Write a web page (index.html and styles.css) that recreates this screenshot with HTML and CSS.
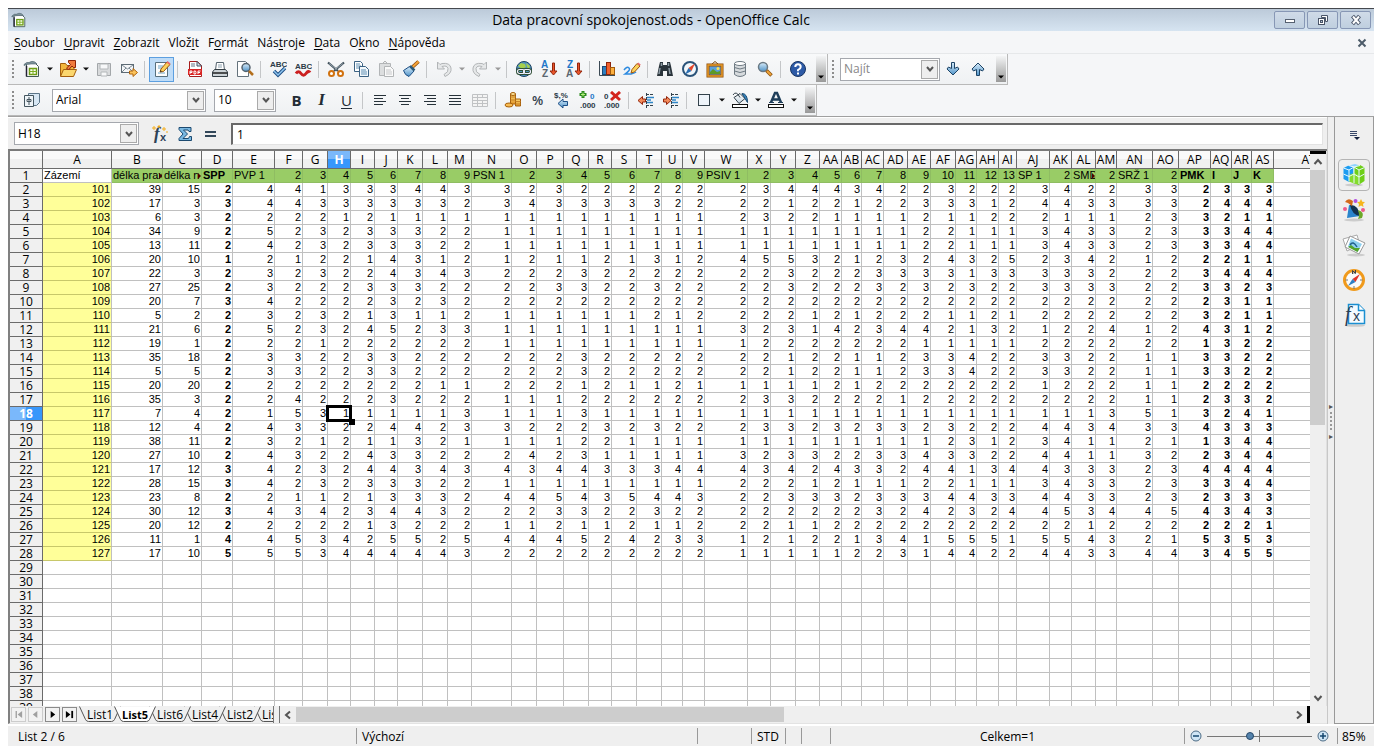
FILE: index.html
```html
<!DOCTYPE html>
<html lang="cs">
<head>
<meta charset="utf-8">
<title>Data pracovní spokojenost.ods - OpenOffice Calc</title>
<link rel="stylesheet" href="styles.css">
</head>
<body>
<svg class="defs" aria-hidden="true">
  <defs>
    <linearGradient id="blue" x1="0" y1="0" x2="0" y2="1"><stop offset="0" stop-color="#d8ecfa"/><stop offset="1" stop-color="#4f93c8"/></linearGradient>
    <linearGradient id="gold" x1="0" y1="0" x2="0" y2="1"><stop offset="0" stop-color="#fbd871"/><stop offset="1" stop-color="#e2962a"/></linearGradient>
    <linearGradient id="steel" x1="0" y1="0" x2="0" y2="1"><stop offset="0" stop-color="#ffffff"/><stop offset="1" stop-color="#c3d3df"/></linearGradient>
    <symbol id="i-calc" viewBox="0 0 18 18"><path d="M3.500 3.500h9l3 3v10h-12z" fill="#fff" stroke="#435a52"/><path d="M1 4.500q3-3 5-2Q9 .5 12 2l2 2H8Q4 4 1 5.500z" fill="#7d929b" stroke="#4a5f68" stroke-width=".6"/><path d="M3.500 6v10.500" stroke="#223" stroke-width="1.500"/><rect x="6.500" y="8.500" width="7" height="6" fill="#fbffef" stroke="#6c9d16" stroke-width="1.500"/><path d="M10 8v7M6 11.500h8" stroke="#7cae22"/></symbol>
    <symbol id="i-down" viewBox="0 0 8 8"><path d="M1 2.500h6L4 5.500z" fill="currentColor"/></symbol>
    <symbol id="i-chev" viewBox="0 0 8 8"><path d="M1 2l3 3.500L7 2" fill="none" stroke="#555" stroke-width="2"/></symbol>
  </defs>
</svg>
<div class="window">
  <header class="titlebar">
    <svg class="app-icon" viewBox="0 0 18 18"><use href="#i-calc"/></svg>
    <h1>Data pracovní spokojenost.ods - OpenOffice Calc</h1>
    <div class="win-buttons">
      <button aria-label="Minimalizovat"><svg viewBox="0 0 14 12"><rect x="2.500" y="5.500" width="9" height="3" fill="#fff" stroke="#556070"/></svg></button>
      <button aria-label="Obnovit"><svg viewBox="0 0 14 12"><path d="M5.500 1.500h6v6h-2v-4h-4z" fill="#fff" stroke="#4a5568"/><rect x="2.500" y="4.500" width="6" height="6" fill="#fff" stroke="#4a5568"/><rect x="4.500" y="6.500" width="2" height="2" fill="#b9c8d8" stroke="#4a5568"/></svg></button>
      <button aria-label="Zavřít"><svg viewBox="0 0 14 12"><path d="M3.500 2l7 8M10.500 2l-7 8" stroke="#4a5568" stroke-width="4"/><path d="M4 2.500l6 7M10 2.500l-6 7" stroke="#fff" stroke-width="2"/></svg></button>
    </div>
  </header>

  <nav class="menubar">
    <button><u>S</u>oubor</button><button><u>U</u>pravit</button><button><u>Z</u>obrazit</button><button>Vlož<u>i</u>t</button><button>F<u>o</u>rmát</button><button>Nás<u>t</u>roje</button><button><u>D</u>ata</button><button>O<u>k</u>no</button><button><u>N</u>ápověda</button>
    <button class="doc-close" aria-label="Zavřít dokument"><svg viewBox="0 0 10 10"><path d="M1.500 1.500l7 7M8.500 1.500l-7 7" stroke="#4d5c6a" stroke-width="2"/></svg></button>
  </nav>

  <div class="bars">
  <div class="toolbar-row">
    <div class="toolbar">
      <span class="grip"></span>
      <button class="tb" aria-label="Nový"><svg viewBox="0 0 18 18"><use href="#i-calc"/></svg></button><button class="dd" aria-label="Nový: možnosti"><svg viewBox="0 0 8 8"><use href="#i-down"/></svg></button>
      <button class="tb" aria-label="Otevřít"><svg viewBox="0 0 18 18"><path d="M1.500 16V3.500h5l1.500 2h7V10" fill="#f2b63c" stroke="#a45e0d"/><path d="M1.500 16.500l3-7h13l-3 7z" fill="#fbd76e" stroke="#a45e0d"/><path d="M7.500 8l4-3.500L9.500 2.500v-2h7v7h-2l-1.500-1.500-3.500 4z" fill="#f07a3c" stroke="#8c2408"/></svg></button><button class="dd" aria-label="Otevřít: možnosti"><svg viewBox="0 0 8 8"><use href="#i-down"/></svg></button>
      <button class="tb off" aria-label="Uložit"><svg viewBox="0 0 18 18"><path d="M2.500 3.500h13v12h-13z" fill="#d8dadc" stroke="#a3a7aa"/><path d="M5 4h8v5H5zM6 12h6v4H6z" fill="#f7f8f9" stroke="#b4b8ba"/></svg></button>
      <button class="tb" aria-label="E-mail"><svg viewBox="0 0 18 18"><rect x="1.500" y="4.500" width="12" height="8" fill="#f4f6f8" stroke="#5d6b75"/><path d="M2 5l5.500 4L13 5M2 12l4-4m3 0l4 4" fill="none" stroke="#7c8a94"/><path d="M9.500 11h3.500V8.500l4.500 4-4.500 4V14H9.500z" fill="#fac35c" stroke="#b0640c"/></svg></button>
      <i class="sep"></i>
      <button class="tb on" aria-label="Upravit soubor"><svg viewBox="0 0 18 18"><path d="M2.500 2.500h12v14h-12z" fill="#fdfdfd" stroke="#58707e"/><path d="M5 6h5M5 8h4M5 13h7" stroke="#6fa4c4"/><path d="M7 12l1-3 6-7 3 2.500-6.500 7z" fill="#fbd25a" stroke="#a0560b"/><path d="M13.500 2.500l1-1.500 3 2.500-1 1.500z" fill="#e9696a"/><path d="M7 12l.6-1.800 1.500 1.200z" fill="#333"/></svg></button>
      <i class="sep"></i>
      <button class="tb" aria-label="Export do PDF"><svg viewBox="0 0 18 18"><path d="M3.500 1.500h8l4 4v11h-12z" fill="#fff" stroke="#a51d1d"/><path d="M11 1.500V6h4.500z" fill="#d8e3ea" stroke="#456"/><path d="M5 4h4M5 6h4" stroke="#678"/><rect x="2" y="9" width="14" height="6" fill="#d92525"/><path d="M4 14v-3h2v1.500H4M8 11v3h1.500l.5-1.500-.5-1.500zM12 14v-3h2.500M12 12.500h2" stroke="#fff" fill="none"/></svg></button>
      <button class="tb" aria-label="Tisk"><svg viewBox="0 0 18 18"><path d="M4.500 10L5.500 2.500h7L13.500 10z" fill="#fff" stroke="#53626d"/><path d="M7 5h4M7 7h4" stroke="#8fa3b1"/><path d="M1.500 12l2-2.500h11l2 2.500v4.500h-15z" fill="#cbd2d6" stroke="#333d44"/><path d="M2 13h14" stroke="#222" stroke-width="1.500"/></svg></button>
      <button class="tb" aria-label="Náhled"><svg viewBox="0 0 18 18"><path d="M1.500 1.500h8l3 3v12h-11z" fill="#fff" stroke="#64727c"/><circle cx="10" cy="7.500" r="4" fill="url(#blue)" stroke="#55636e" stroke-width="1.500"/><path d="M13 11l4 4" stroke="#b36e1c" stroke-width="2.500"/></svg></button>
      <i class="sep"></i>
      <button class="tb" aria-label="Kontrola pravopisu"><svg viewBox="0 0 18 18"><text x="1" y="7" class="g-abc">ABC</text><path d="M5 11l4 4 7-7" fill="none" stroke="#1d4f86" stroke-width="3.500"/><path d="M5 11l4 4 7-7" fill="none" stroke="#8fc5ef" stroke-width="1.500"/></svg></button>
      <button class="tb" aria-label="Automatická kontrola"><svg viewBox="0 0 18 18"><text x="1" y="9" class="g-abc">ABC</text><path d="M2 13.500q2.500-3.500 5 0t5 0 4-1" fill="none" stroke="#cb1f1f" stroke-width="3"/></svg></button>
      <i class="sep"></i>
      <button class="tb" aria-label="Vyjmout"><svg viewBox="0 0 18 18"><path d="M1 2.500l10 8.500M17 2.500L7 11" stroke="#3f4f5a" stroke-width="2.200"/><path d="M2 3.500l8 6M16 3.500l-8 6" stroke="#b9c5ce" stroke-width=".7"/><circle cx="4.500" cy="13.500" r="2.500" fill="#fff" stroke="#d1710e" stroke-width="2"/><circle cx="13.500" cy="13.500" r="2.500" fill="#fff" stroke="#d1710e" stroke-width="2"/></svg></button>
      <button class="tb" aria-label="Kopírovat"><svg viewBox="0 0 18 18"><path d="M2.500 1.500h6l2 2v8h-8z" fill="#fff" stroke="#3b6283"/><path d="M4 4h4M4 6h5M4 8h4" stroke="#5f8fb3"/><path d="M7.500 6.500h6l3 3v7h-9z" fill="#f2f8fc" stroke="#3b6283"/><path d="M9 10h5M9 12h6M9 14h6" stroke="#5f8fb3"/></svg></button>
      <button class="tb off" aria-label="Vložit"><svg viewBox="0 0 18 18"><path d="M2.500 3.500h11v12h-11z" fill="#dcdedf" stroke="#b2b5b7"/><path d="M5.500 3.500L8 1l2.500 2.500z" fill="#eee" stroke="#b2b5b7"/><path d="M7.500 6.500h6l3 3v7h-9z" fill="#fafafa" stroke="#b2b5b7"/><path d="M9 10h5M9 12h6M9 14h6" stroke="#c6c8ca"/></svg></button>
      <button class="tb" aria-label="Kopírovat formát"><svg viewBox="0 0 18 18"><path d="M16.500 1.500l-6 5.500" stroke="#8a4a0b" stroke-width="3.500"/><path d="M16.500 1.500l-6 5.500" stroke="#f5a338" stroke-width="2"/><path d="M1.500 10.500l6-4 4.500 4.500-5 5.500q-4-1-5.500-6z" fill="url(#blue)" stroke="#1c4e85"/><path d="M8 6l4.500 4.500" stroke="#2c5a7a" stroke-width="2.500"/></svg></button>
      <i class="sep"></i>
      <button class="tb off" aria-label="Zpět"><svg viewBox="0 0 18 18"><path d="M2.500 2v7h7L7 6.500q5-1.500 6 2t-4 6l1 2q7-3 6-8.500T7 3.500L5 4.500z" fill="#e6e8e9" stroke="#b2b5b7"/></svg></button><button class="dd off" aria-label="Zpět: historie"><svg viewBox="0 0 8 8"><use href="#i-down"/></svg></button>
      <button class="tb off" aria-label="Znovu"><svg viewBox="0 0 18 18"><path d="M15.500 2v7h-7L11 6.500q-5-1.500-6 2t4 6l-1 2q-7-3-6-8.500T11 3.500l2 1z" fill="#e6e8e9" stroke="#b2b5b7"/></svg></button><button class="dd off" aria-label="Znovu: historie"><svg viewBox="0 0 8 8"><use href="#i-down"/></svg></button>
      <i class="sep"></i>
      <button class="tb" aria-label="Hypertextový odkaz"><svg viewBox="0 0 18 18"><circle cx="9" cy="9" r="7.500" fill="#4f93c0" stroke="#1d415e"/><path d="M3 6l3-3 4 1 1 3-4 2zM11 3l4 3-1 3-2-2z" fill="#a5cf4d"/><rect x="2.500" y="9.500" width="7" height="4" rx="2" fill="none" stroke="#2f4f33" stroke-width="3"/><rect x="8.500" y="9.500" width="7" height="4" rx="2" fill="none" stroke="#2f4f33" stroke-width="3"/><rect x="2.500" y="9.500" width="7" height="4" rx="2" fill="none" stroke="#eef" stroke-width="1.200"/><rect x="8.500" y="9.500" width="7" height="4" rx="2" fill="none" stroke="#eef" stroke-width="1.200"/></svg></button>
      <button class="tb" aria-label="Seřadit vzestupně"><svg viewBox="0 0 18 18"><text x="1" y="8" class="g-az g-blue">A</text><text x="2" y="17" class="g-az">Z</text><path d="M12.500 3v8h-2.500l3.500 4 3.500-4H14.500V3z" fill="#e9552a" stroke="#94260c"/></svg></button>
      <button class="tb" aria-label="Seřadit sestupně"><svg viewBox="0 0 18 18"><text x="2" y="8" class="g-az g-blue">Z</text><text x="1" y="17" class="g-az">A</text><path d="M12.500 3v8h-2.500l3.500 4 3.500-4H14.500V3z" fill="#e9552a" stroke="#94260c"/></svg></button>
      <i class="sep"></i>
      <button class="tb" aria-label="Graf"><svg viewBox="0 0 18 18"><path d="M1.500 1v14.500H17" fill="none" stroke="#3b4a55"/><rect x="4.500" y="6.500" width="4" height="8" fill="#2f7fc0" stroke="#174a77"/><rect x="8.500" y="2.500" width="4" height="12" fill="#f0602c" stroke="#8e240b"/><rect x="12.500" y="7.500" width="4" height="7" fill="#fbb040" stroke="#a35b0c"/></svg></button>
      <button class="tb" aria-label="Kresba"><svg viewBox="0 0 18 18"><path d="M1 10q3-4 5-2t-4 6h6q4-1 5-2" fill="none" stroke="#2e8be0" stroke-width="1.500"/><path d="M8 13l1-3.500 5-6 3 2.500-5.500 6z" fill="#fbd25a" stroke="#a0560b"/><path d="M14.200 4l1-1.500 2.500 2-.8 1.300z" fill="#e9696a"/></svg></button>
      <i class="sep"></i>
      <button class="tb" aria-label="Najít a nahradit"><svg viewBox="0 0 18 18"><path d="M4 2h3v3h4V2h3l1 4 2 10h-6v-5H7v5H1L3 6z" fill="#2a343b"/><path d="M4 8l-1 6M13 8l1 6M5.500 3v3M12.500 3v3" stroke="#8d9ba5" stroke-width="1.500"/></svg></button>
      <button class="tb" aria-label="Navigátor"><svg viewBox="0 0 18 18"><circle cx="9" cy="9" r="7" fill="#f1f7fb" stroke="#2a5379" stroke-width="2"/><path d="M14 3.500L10.500 11 7.500 8z" fill="#e2452a"/><path d="M4 14.500L10.500 11 7.500 8z" fill="#2b6eb0"/></svg></button>
      <button class="tb" aria-label="Galerie"><svg viewBox="0 0 18 18"><path d="M6 4l3-2.500L12 4" fill="none" stroke="#7a4508"/><rect x="2" y="5" width="14" height="11" fill="#5ba0dc" stroke="#8f4d06" stroke-width="3"/><rect x="2" y="5" width="14" height="11" fill="none" stroke="#e69a2b" stroke-width="1.500"/><path d="M4 12l3-3 4 3 3-1v3H4z" fill="#5d9a28"/><circle cx="12" cy="8.500" r="1.500" fill="#ffe257"/></svg></button>
      <button class="tb" aria-label="Zdroje dat"><svg viewBox="0 0 18 18"><path d="M3.500 3.500v11q5.500 4 11 0v-11" fill="#d7dbde" stroke="#6e7a83"/><ellipse cx="9" cy="3.500" rx="5.500" ry="2" fill="#fff" stroke="#6e7a83"/><path d="M3.500 7.500q5.500 3 11 0M3.500 11q5.500 3 11 0" fill="none" stroke="#6e7a83"/></svg></button>
      <button class="tb" aria-label="Lupa"><svg viewBox="0 0 18 18"><circle cx="7" cy="7" r="4.500" fill="url(#blue)" stroke="#6a7984" stroke-width="1.500"/><path d="M10.500 10.500l5 5" stroke="#8c520d" stroke-width="3.500"/><path d="M11 11l4 4" stroke="#f0a43b" stroke-width="2"/></svg></button>
      <i class="sep"></i>
      <button class="tb" aria-label="Nápověda"><svg viewBox="0 0 18 18"><circle cx="9" cy="9" r="7.500" fill="#2d5aa6" stroke="#173463"/><path d="M6.300 7q0-2.700 2.700-2.700T11.700 7Q11.700 8.500 9 10v1.300" fill="none" stroke="#fff" stroke-width="2"/><rect x="8" y="12.500" width="2" height="2" fill="#fff"/></svg></button>
      <button class="more" aria-label="Další tlačítka"><svg viewBox="0 0 8 8"><use href="#i-down"/></svg></button>
    </div>
    <div class="toolbar">
      <span class="grip"></span>
      <div class="combo find"><input type="text" aria-label="Najít" placeholder="Najít"><button aria-label="Historie hledání"><svg viewBox="0 0 8 8"><use href="#i-chev"/></svg></button></div>
      <button class="tb" aria-label="Najít další"><svg viewBox="0 0 18 18"><path d="M7.500 2.500h3v6l3-1.500 1.500 2L9 15 3 9l1.500-2 3 1.500z" fill="url(#blue)" stroke="#1d4466"/></svg></button>
      <button class="tb" aria-label="Najít předchozí"><svg viewBox="0 0 18 18"><path d="M7.500 15.500h3v-6l3 1.500L15 9 9 3 3 9l1.500 2 3-1.500z" fill="url(#blue)" stroke="#1d4466"/></svg></button>
      <button class="more" aria-label="Další tlačítka"><svg viewBox="0 0 8 8"><use href="#i-down"/></svg></button>
    </div>
  </div>

  <div class="toolbar-row">
    <div class="toolbar format">
      <span class="grip"></span>
      <button class="tb" aria-label="Styly a formátování"><svg viewBox="0 0 18 18"><path d="M5.500 2.500h11v9l-3 3h-8z" fill="#d7e7f4" stroke="#5c7588"/><path d="M1.500 4.500h9v11h-9z" fill="#eef4f8" stroke="#44555f"/><path d="M6 6v8M4 8.500h4v2H4z" stroke="#44555f" fill="#fff"/></svg></button>
      <div class="combo font"><select aria-label="Název písma"><option>Arial</option></select><span class="drop"><svg viewBox="0 0 8 8"><use href="#i-chev"/></svg></span></div>
      <div class="combo size"><select aria-label="Velikost písma"><option>10</option></select><span class="drop"><svg viewBox="0 0 8 8"><use href="#i-chev"/></svg></span></div>
      <button class="tb letter bold">B</button><button class="tb letter italic">I</button><button class="tb letter under">U</button>
      <i class="sep"></i>
      <button class="tb" aria-label="Zarovnat vlevo"><svg viewBox="0 0 18 18"><path d="M3 4.500h12M3 7.500h9M3 10.500h12M3 13.500h9" stroke="#27323a"/></svg></button>
      <button class="tb" aria-label="Zarovnat na střed"><svg viewBox="0 0 18 18"><path d="M3 4.500h12M5 7.500h8M3 10.500h12M5 13.500h8" stroke="#27323a"/></svg></button>
      <button class="tb" aria-label="Zarovnat vpravo"><svg viewBox="0 0 18 18"><path d="M3 4.500h12M6 7.500h9M3 10.500h12M6 13.500h9" stroke="#27323a"/></svg></button>
      <button class="tb" aria-label="Do bloku"><svg viewBox="0 0 18 18"><path d="M3 4.500h12M3 7.500h12M3 10.500h12M3 13.500h12" stroke="#27323a"/></svg></button>
      <button class="tb off" aria-label="Sloučit buňky"><svg viewBox="0 0 18 18"><path d="M1.500 3.500h15v12h-15zM1.500 6.500h15M1.500 9.500h15M1.500 12.500h15M6.500 3.500v12M11.500 3.500v3M11.500 9.500v6" fill="#f4f4f4" stroke="#c0c2c4"/></svg></button>
      <i class="sep"></i>
      <button class="tb" aria-label="Měna"><svg viewBox="0 0 18 18"><path d="M6.500 3v10h5V3z" fill="url(#gold)" stroke="#a7600c"/><ellipse cx="9" cy="3" rx="2.500" ry="1.500" fill="#fde49a" stroke="#a7600c"/><path d="M11.500 8v7h5V8z" fill="url(#gold)" stroke="#a7600c"/><path d="M11.500 10.500h5M11.500 13h5M6.500 6h5M6.500 9h5" stroke="#c9842a"/><ellipse cx="5" cy="14" rx="4" ry="2" fill="#f7bb52" stroke="#a7600c"/></svg></button>
      <button class="tb letter pct">%</button>
      <button class="tb" aria-label="Standardní formát"><svg viewBox="0 0 18 18"><text x="0" y="7" class="g-sm">$,%</text><path d="M13.500 10.500H9V8l-5 4.500L9 17v-2.500h4.500z" fill="url(#blue)" stroke="#1d4f86"/></svg></button>
      <button class="tb" aria-label="Přidat desetinné místo"><svg viewBox="0 0 18 18"><path d="M4 0v7M.5 3.500h7" stroke="#2b8a1c" stroke-width="3"/><path d="M4 1.500v4M2 3.500h4" stroke="#b5f07c"/><text x="11" y="8" class="g-sm g-blue">0</text><text x="1" y="17" class="g-sm">.000</text></svg></button>
      <button class="tb" aria-label="Odebrat desetinné místo"><svg viewBox="0 0 18 18"><text x="0" y="8" class="g-sm">0</text><text x="0" y="17" class="g-sm">.000</text><path d="M7 1l9 8M16 1l-9 8" stroke="#d3231c" stroke-width="3"/></svg></button>
      <i class="sep"></i>
      <button class="tb" aria-label="Zmenšit odsazení"><svg viewBox="0 0 18 18"><path d="M9.500 2v15M9 3.500h8M9 14.500h8" stroke="#33414b" stroke-dasharray="3 1"/><path d="M10 6.500h7M10 9h4M10 11.500h6" stroke="#2f86c8" stroke-width="1.500"/><path d="M8.500 8H5.500V5.500L1 9.500l4.500 4v-2.500h3z" fill="#f28a5a" stroke="#94260c"/></svg></button>
      <button class="tb" aria-label="Zvětšit odsazení"><svg viewBox="0 0 18 18"><path d="M9.500 2v15M9 3.500h8M9 14.500h8" stroke="#33414b" stroke-dasharray="3 1"/><path d="M10 6.500h7M10 9h4M10 11.500h6" stroke="#2f86c8" stroke-width="1.500"/><path d="M1.500 8H4.500V5.500L9 9.500l-4.500 4v-2.500h-3z" fill="#f28a5a" stroke="#94260c"/></svg></button>
      <i class="sep"></i>
      <button class="tb" aria-label="Ohraničení"><svg viewBox="0 0 18 18"><rect x="3.500" y="3.500" width="11" height="11" fill="#eef4fa" stroke="#33414b"/></svg></button><button class="dd" aria-label="Ohraničení: možnosti"><svg viewBox="0 0 8 8"><use href="#i-down"/></svg></button>
      <button class="tb" aria-label="Barva pozadí"><svg viewBox="0 0 18 18"><path d="M3 6.500l6-4 5 5-6 5z" fill="url(#steel)" stroke="#33414b"/><path d="M2 4q3-5 7 2.500" fill="none" stroke="#33414b"/><path d="M11 2.500q5.500 0 5.500 9l-2.500-4z" fill="#3486c2" stroke="#1c4a70"/><rect x="1.500" y="13.500" width="15" height="3" fill="#fff" stroke="#111"/></svg></button><button class="dd" aria-label="Barva pozadí: možnosti"><svg viewBox="0 0 8 8"><use href="#i-down"/></svg></button>
      <button class="tb" aria-label="Barva písma"><svg viewBox="0 0 18 18"><path d="M4 11.500L8 2h2l4 9.500M6 8.500h6" fill="none" stroke="#1f3f5b" stroke-width="2.500"/><path d="M2 11.500h5M11 11.500h5" stroke="#1f3f5b"/><rect x="1.500" y="13.500" width="15" height="3" fill="#fff" stroke="#111"/></svg></button><button class="dd" aria-label="Barva písma: možnosti"><svg viewBox="0 0 8 8"><use href="#i-down"/></svg></button>
      <button class="more" aria-label="Další tlačítka"><svg viewBox="0 0 8 8"><use href="#i-down"/></svg></button>
    </div>
  </div>
  </div>

  <main class="workspace">
    <section class="document">
      <div class="formula-bar">
        <div class="combo namebox"><input type="text" aria-label="Pole názvu" value="H18"><button aria-label="Seznam názvů"><svg viewBox="0 0 8 8"><use href="#i-chev"/></svg></button></div>
        <div class="formula-tools">
        <button class="tb" aria-label="Průvodce funkcí"><svg viewBox="0 0 18 18"><text x="3" y="14" class="g-fx">f</text><text x="9" y="16" class="g-x">x</text><path d="M3 1v4M1 3h4M8 0v3M6.500 1.500h3M13 2v4M11 4h4M16 6v2" stroke="#f5ae1c"/></svg></button>
        <button class="tb" aria-label="Součet"><svg viewBox="0 0 18 18"><path d="M3 2.500h12v4h-2l-1-1.500H7.500L11.500 9l-4.500 4.500h5.500l1-2h2v4H3v-2L7 9 3 4.500z" fill="#79b8e2" stroke="#1c4a70"/></svg></button>
        <button class="tb" aria-label="Funkce"><svg viewBox="0 0 18 18"><path d="M4 7h11M4 11h11" stroke="#33485a" stroke-width="2"/></svg></button>
        </div>
        <input class="formula" type="text" aria-label="Vstupní řádek" value="1">
      </div>
      <div class="sheet">
        <div class="viewport"><table class="cells"><colgroup></colgroup><thead></thead><tbody></tbody></table></div>
        <div class="vscroll">
          <span class="split-h"></span>
          <button aria-label="Nahoru"><svg viewBox="0 0 10 10"><path d="M1.500 7L5 3l3.500 4" fill="none" stroke="#555" stroke-width="2"/></svg></button>
          <div class="track"><span class="thumb"></span></div>
          <button aria-label="Dolů"><svg viewBox="0 0 10 10"><path d="M1.500 3L5 7l3.500-4" fill="none" stroke="#555" stroke-width="2"/></svg></button>
        </div>
        <div class="tabrow">
          <div class="tabnav">
            <button class="off" aria-label="První list"><svg viewBox="0 0 10 10"><path d="M2.500 1v8" stroke="currentColor" stroke-width="1.500"/><path d="M9 1v8L4 5z" fill="currentColor"/></svg></button>
            <button class="off" aria-label="Předchozí list"><svg viewBox="0 0 10 10"><path d="M7 1v8L2 5z" fill="currentColor"/></svg></button>
            <button aria-label="Další list"><svg viewBox="0 0 10 10"><path d="M3 1v8l5-4z" fill="currentColor"/></svg></button>
            <button aria-label="Poslední list"><svg viewBox="0 0 10 10"><path d="M8 1v8" stroke="currentColor" stroke-width="2"/><path d="M1 1v8l5-4z" fill="currentColor"/></svg></button>
          </div>
          <div class="tabs"></div>
          <div class="hscroll">
            <button aria-label="Vlevo"><svg viewBox="0 0 10 10"><path d="M7 1.500L3 5l4 3.500" fill="none" stroke="#555" stroke-width="2"/></svg></button>
            <div class="track"><span class="thumb"></span></div>
            <button aria-label="Vpravo"><svg viewBox="0 0 10 10"><path d="M3 1.500L7 5 3 8.500" fill="none" stroke="#555" stroke-width="2"/></svg></button>
            <span class="split-v"></span>
          </div>
        </div>
      </div>
    </section>
    <div class="splitter"><span>▸</span><i></i><i></i><i></i><i></i><i></i><span>▸</span></div>
    <aside class="sidebar">
      <button class="side-menu" aria-label="Nastavení postranní lišty"><svg viewBox="0 0 12 12"><path d="M1 2.500h7M1 4.500h7M1 6.500h7" stroke="#39496a"/><path d="M5 8h6l-3 3z" fill="#14213f"/></svg></button>
      <button class="side on" aria-label="Vlastnosti"><svg viewBox="0 0 24 24"><ellipse cx="12" cy="22" rx="9" ry="1.500" fill="#ccc"/><path d="M1.500 5l5-2.500 5 1.500v13l-4.500 2-5.500-3z" fill="#1d9cf0"/><path d="M6.500 2.500L13 1l5 1.500-6 2z" fill="#8fd4ff"/><path d="M12 4l6-2 4.500 2.500V18l-6 4-4.500-2z" fill="#6fcf18"/><path d="M7 12l5-2 5 2v9.500l-5-1-5-2z" fill="#84dc2c"/><path d="M1.500 5L7 7l5-3 5 3 5.500-2.500M7 7v11.500M17 7v14M1.500 11L7 13.500l5-2.500 5 3 5.500-3M12 4v16M6.500 2.500L12 4l6-1.500" fill="none" stroke="#e9f8ff"/></svg></button>
      <button class="side" aria-label="Styly"><svg viewBox="0 0 24 24"><ellipse cx="12" cy="22" rx="10" ry="1.500" fill="#ccc"/><path d="M5 20L7 7q8 1 11 11z" fill="#2a84cc"/><path d="M8 7q8-1 10 11-8-1-10-11z" fill="#14324f"/><path d="M3 4q3-5 8-1l-1 5-4-3z" fill="#d5691a"/><path d="M16 12q7 2 4 8l-4 1q2-3 0-9z" fill="#6da828"/><path d="M19 1l1.300 2.700 2.700.3-2 2 .5 3L19 7.500 16.500 9l.5-3-2-2 2.700-.3z" fill="#f6b51d"/><circle cx="13.500" cy="3" r="2" fill="#b24ee0"/><circle cx="3" cy="11" r="2" fill="#ee5a8c"/><circle cx="21" cy="12" r="2" fill="#ee5a8c"/></svg></button>
      <button class="side" aria-label="Galerie"><svg viewBox="0 0 24 24"><ellipse cx="14" cy="22" rx="9" ry="1.500" fill="#ccc"/><path d="M1 6l14-4 3 10-13 6z" fill="#fff" stroke="#aaa"/><path d="M8 3l15 7-6 11L3 14z" fill="#fff" stroke="#999"/><path d="M9 5.500l11 5.500-4.500 8L6 13.500z" fill="#8fd0f0"/><path d="M6 14l3-2 4 3 5 0-2.500 4z" fill="#55a42b"/><path d="M8 12q3-5 7 2" fill="none" stroke="#1e5f8c" stroke-width="1.500"/></svg></button>
      <button class="side" aria-label="Navigátor"><svg viewBox="0 0 24 24"><circle cx="12" cy="12" r="9.500" fill="#fafafa" stroke="#f09a1c" stroke-width="3"/><path d="M12 3v3M3.500 12H6M18 12h2.500M12 18v3" stroke="#777"/><path d="M10.500 6V2.500l3 3V2" fill="none" stroke="#444"/><path d="M18 6l-4.500 8-3-3z" fill="#e0322a"/><path d="M6 18l7.500-4-3-3z" fill="#2f7fc4"/></svg></button>
      <button class="side" aria-label="Funkce"><svg viewBox="0 0 24 24"><ellipse cx="13" cy="22.500" rx="10" ry="1.300" fill="#ccc"/><path d="M6.500 1.500h10l6 6v13h-16z" fill="#f5fbff" stroke="#1b8fd1" stroke-width="1.500"/><path d="M16.500 1.500v6h6" fill="#fff" stroke="#1b8fd1" stroke-width="1.500"/><text x="3" y="18" class="g-fx big">f</text><text x="11" y="18" class="g-x big">x</text></svg></button>
    </aside>
  </main>

  <footer class="status">
    <span class="s-sheet">List 2 / 6</span>
    <span class="s-style">Výchozí</span>
    <span class="s-ins"></span>
    <span class="s-mode">STD</span>
    <span class="s-mod"></span>
    <span class="s-sig"></span>
    <span class="s-sum">Celkem=1</span>
    <span class="s-zoom">
      <button aria-label="Oddálit"><svg viewBox="0 0 12 12"><circle cx="6" cy="6" r="5" fill="#cfe5f5" stroke="#4d6c86"/><path d="M3 6h6" stroke="#16476f" stroke-width="1.500"/></svg></button>
      <input type="range" min="0" max="100" value="40" aria-label="Měřítko">
      <button aria-label="Přiblížit"><svg viewBox="0 0 12 12"><circle cx="6" cy="6" r="5" fill="#cfe5f5" stroke="#4d6c86"/><path d="M3 6h6M6 3v6" stroke="#16476f" stroke-width="1.500"/></svg></button>
    </span>
    <span class="s-pct">85%</span>
  </footer>
</div>
<script src="script.js"></script>
</body>
</html>
```

FILE: styles.css
```css
* { box-sizing: border-box; }
body {
  margin: 0;
  padding: 8px;
  height: 100vh;
  background: #fff;
  color: #000;
  font: 12px/16px "Open Sans", "Noto Sans", sans-serif;
  overflow: hidden;
}
button, input, select { font: inherit; color: inherit; margin: 0; padding: 0; border: 0; background: none; border-radius: 0; outline: 0; }
button { display: flex; align-items: center; justify-content: center; flex: none; }
svg { display: block; flex: none; }
.defs { position: absolute; width: 0; height: 0; }
.window { display: flex; flex-direction: column; height: 100%; background: #efefef; }

/* title and menu */
.titlebar { display: grid; grid-template-columns: 20px 1fr 100px; align-items: center; height: 23px; border-top: 1px solid #45494f; background: linear-gradient(#bccad9, #d6e4f1); flex: none; }
.app-icon { width: 16px; height: 16px; margin-left: 3px; }
.titlebar h1 { margin: 0; font-size: 14px; line-height: 22px; font-weight: 400; text-align: center; white-space: nowrap; }
.win-buttons { display: flex; justify-content: flex-end; gap: 2px; padding-right: 3px; }
.win-buttons button { width: 31px; height: 18px; border: 1px solid #8797b5; border-radius: 2px; background: linear-gradient(#d0dbe8, #bfcfdf); }
.win-buttons svg { width: 14px; height: 12px; }
.menubar { display: flex; align-items: center; gap: 9px; height: 23px; padding: 2px 6px 0; background: #f5f6f8; border-bottom: 1px solid #e6e8ea; flex: none; }
.menubar u { text-underline-offset: 2px; text-decoration-thickness: 1px; }
.doc-close { margin-left: auto; margin-right: 1px; }
.doc-close svg { width: 10px; height: 10px; }

/* toolbars */
.bars { background: #f5f6f8; border-bottom: 1px solid #a0a0a0; flex: none; }
.toolbar-row { display: flex; height: 31px; }
.toolbar { display: flex; align-items: center; padding-left: 4px; padding-right: 1px; background: linear-gradient(#f8f9fa, #eff1f3); border-right: 1px solid #b9b9b9; border-bottom: 1px solid #b9b9b9; }
.grip { width: 3px; height: 19px; margin-right: 4px; background: repeating-linear-gradient(#8c8c8c 0 2px, transparent 2px 4px); clip-path: inset(0 1px 0 0); }
.tb { width: 25px; height: 25px; }
.tb svg { width: 18px; height: 18px; }
.tb.on { border: 1px solid #5c9fe0; background: #bfdcf7; }
.dd { width: 11px; height: 25px; color: #111; }
.dd svg, .more svg { width: 8px; height: 8px; }
.dd.off { color: #999; }
.sep { width: 1px; height: 17px; margin: 0 4px 0 3px; background: #c4c6c8; flex: none; }
.more { width: 10px; height: 26px; margin-left: 6px; align-items: flex-end; padding-bottom: 1px; background: linear-gradient(#f3f4f5, #999); }
.combo { display: grid; height: 23px; border: 1px solid #a5a8ae; background: #fff; }
.combo > * { grid-area: 1 / 1; min-width: 0; }
.combo input, .combo select { width: 100%; padding: 0 20px 0 3px; appearance: none; }
.combo input::placeholder { color: #888; opacity: 1; }
.combo button, .drop { display: flex; align-items: center; justify-content: center; justify-self: end; align-self: center; width: 17px; height: 19px; margin-right: 1px; border: 1px solid #aaa; background: #eee; pointer-events: none; }
.combo svg { width: 8px; height: 8px; }
.find { width: 100px; margin-left: 1px; }
.font { width: 154px; margin-left: 8px; }
.size { width: 62px; margin: 0 8px; }
.letter { font-weight: 700; font-size: 15px; color: #222c35; }
.letter.italic { font-family: "Liberation Serif", serif; font-style: italic; font-size: 17px; }
.letter.under { font-weight: 400; text-decoration: underline; text-underline-offset: 2px; }
.letter.pct { font-size: 13px; font-weight: 600; color: #34424d; }
.g-abc, .g-sm { font: 700 8px "Liberation Sans", sans-serif; fill: #2c3b47; }
.g-az { font: 700 10px "Liberation Sans", sans-serif; fill: #5b6670; }
.g-blue, .g-az.g-blue { fill: #1f77c9; }
.g-fx { font: italic 700 17px "Liberation Serif", serif; fill: #2c4257; }
.g-x { font: 700 11px "Liberation Sans", sans-serif; fill: #2c4257; }
.g-fx.big { font-size: 20px; font-weight: 400; }
.g-x.big { font-size: 14px; font-weight: 400; }

/* document */
.workspace { display: flex; flex: 1; min-height: 0; }
.document { display: flex; flex-direction: column; flex: 1; min-width: 0; border-right: 1px solid #c8c8c8; }
.formula-bar { display: flex; align-items: center; height: 32px; padding: 0 4px 0 6px; border-top: 1px solid #fff; flex: none; }
.namebox { width: 125px; }
.formula-tools { display: flex; padding: 0 9px 0 8px; }
.formula { flex: 1; min-width: 0; height: 22px; padding-left: 4px; background: #fff; border: 1px solid #e3e3e3; border-top: 2px solid #696969; border-left: 2px solid #696969; }
.sheet { display: grid; grid-template-columns: 1fr 17px; grid-template-rows: 1fr 17px; flex: 1; min-height: 0; border-style: solid; border-width: 2px 0 1px 2px; border-color: #7a7a7a #999 #e3e3e3 #808080; }
.viewport { overflow: hidden; background: #fff; min-width: 0; min-height: 0; }

.cells { table-layout: fixed; width: 1px; border-collapse: separate; border-spacing: 0; font: 11px/13px "Liberation Sans", Arial, sans-serif; }
.cells th, .cells td { padding: 0 1px; border-style: solid; border-color: #c0c0c0; border-width: 0 1px 1px 0; white-space: nowrap; }
.cells tr { height: 14px; }
.cells thead tr { height: 18px; }
.cells th { font: 12px/13px "Open Sans", sans-serif; border-color: #6b6b6b; background: #f0f0f0; text-align: center; padding: 0; }
.cells thead th { background: linear-gradient(#fafafa 50%, #f0f0f0 50%); line-height: 17px; }
.cells .picked, .cells thead .picked { color: #fff; font-weight: 700; background: linear-gradient(#7ab8fb 45%, #3797fb 45%); }
.cells tbody .picked { background: linear-gradient(90deg, #7ab8fb 50%, #3797fb 50%); }
.cells td { text-align: right; }
.cells td.text { text-align: left; }
.cells td.clip { position: relative; overflow: hidden; }
.cells td.clip::after { content: ""; position: absolute; right: 0; top: 4px; border: solid transparent; border-width: 3px 0 3px 3px; border-left-color: #500000; }
.cells .strong { font-weight: 700; }
.cells .green { background: #99cc66; border-color: #8fbd62; }
.cells .yellow { background: #ffff99; border-bottom-color: #c8c86a; }
.cells .active { position: relative; }
.cells .active::before { content: ""; position: absolute; inset: -2px; border: 3px solid #000; }
.cells .active::after { content: ""; position: absolute; right: -5px; bottom: -5px; width: 6px; height: 6px; background: #000; }

.vscroll { display: flex; flex-direction: column; border-right: 1px solid #e0e0e0; grid-column: 2; grid-row: 1; }
.vscroll button, .hscroll button { width: 16px; height: 16px; }
.vscroll svg, .hscroll svg { width: 10px; height: 10px; }
.split-h { height: 3px; background: #000; flex: none; }
.track { flex: 1; min-width: 0; min-height: 0; }
.thumb { display: block; background: #cdcdcd; }
.vscroll .thumb { height: 49%; width: 15px; }
.tabrow { display: flex; grid-column: 1 / 3; grid-row: 2; min-width: 0; padding-right: 17px; }
.tabnav { display: flex; gap: 2px; padding: 1px 2px 0 1px; }
.tabnav button { width: 15px; height: 15px; border: 1px solid #8a8a8a; background: #f2f2f2; color: #000; }
.tabnav button.off { color: #a0a0a0; border-color: #ccc; }
.tabnav svg { width: 9px; height: 9px; }
.tabs { display: flex; width: 195px; overflow: hidden; border-right: 1px solid #777; }
.tab { position: relative; width: 42px; height: 17px; margin-right: -7px; }
.tab svg { position: absolute; inset: 0; width: 42px; height: 17px; }
.tab svg path { fill: #f0f0f0; stroke: #555; }
.tab span { position: relative; line-height: 15px; }
.tab.current { font-weight: 700; font-size: 11px; }
.tab.current svg path { fill: #fff; }
.hscroll { display: flex; flex: 1; min-width: 0; align-items: center; margin-left: 5px; border-left: 1px solid #777; }
.hscroll .thumb { height: 15px; width: 49%; }
.split-v { width: 3px; align-self: stretch; background: #000; }

.splitter { display: flex; flex-direction: column; align-items: center; justify-content: center; gap: 2px; width: 6px; color: #555; font-size: 8px; }
.splitter i { width: 2px; height: 2px; background: #999; }
.splitter span { line-height: 8px; }
.sidebar { display: flex; flex-direction: column; align-items: center; width: 40px; border: 1px solid #999; border-top: 0; }
.side-menu { width: 32px; height: 36px; padding-left: 2px; margin-bottom: 6px; }
.side-menu svg { width: 12px; height: 12px; }
.side { width: 32px; height: 32px; margin-bottom: 3px; }
.side.on { border: 1px solid #b4b4b4; border-radius: 4px; }
.side svg { width: 24px; height: 24px; }

.status { display: flex; align-items: center; height: 22px; border-top: 2px solid #fff; flex: none; }
.status > span { height: 16px; line-height: 17px; padding-left: 5px; border-left: 1px solid #999; white-space: nowrap; }
.status .s-sheet { flex: 338 0 0; padding-left: 10px; border: 0; }
.status .s-style { flex: 335 0 0; }
.status .s-ins { width: 54px; }
.status .s-mode { width: 34px; }
.status .s-mod { width: 16px; }
.status .s-sig { width: 29px; }
.status .s-sum { flex: 353 0 0; padding: 0; text-align: center; }
.status .s-zoom { display: flex; align-items: center; gap: 5px; width: 153px; padding-right: 8px; }
.s-zoom svg { width: 12px; height: 12px; }
.s-zoom input { flex: 1; min-width: 0; height: 12px; appearance: none; background: linear-gradient(#777, #777) 0 6px / 100% 1px no-repeat, linear-gradient(#777, #777) 50% 0 / 1px 100% no-repeat; }
.s-zoom input::-webkit-slider-thumb { appearance: none; width: 8px; height: 8px; border-radius: 50%; background: #5583ac; border: 1px solid #27496b; }
.status .s-pct { width: 37px; padding-left: 4px; }
```

FILE: script.js
```js
const widths = {
  A: 69, B: 51, C: 39, D: 31, E: 42, F: 28, G: 25, H: 23, I: 24, J: 23, K: 25, L: 25, M: 24,
  N: 40, O: 25, P: 27, Q: 25, R: 23, S: 25, T: 25, U: 21, V: 22, W: 43, X: 23, Y: 25, Z: 24,
  AA: 22, AB: 20, AC: 22, AD: 24, AE: 23, AF: 25, AG: 21, AH: 22, AI: 18, AJ: 33, AK: 22,
  AL: 24, AM: 21, AN: 36, AO: 26, AP: 32, AQ: 21, AR: 20, AS: 22, AT: 70
};
const headings = [
  "Zázemí", "délka prax", "délka n", "SPP", "PVP 1", 2, 3, 4, 5, 6, 7, 8, 9,
  "PSN 1", 2, 3, 4, 5, 6, 7, 8, 9, "PSIV 1", 2, 3, 4, 5, 6, 7, 8, 9, 10, 11, 12, 13,
  "SP 1", 2, "SMD", 2, "SRŽ 1", 2, "PMK", "I", "J", "K"
];
// B, C, then one digit for each of the columns D-AS
const answers = [
  [39, 15, "2441333443", "32322222223444342", "232223422332333"],
  [17, 3, "3443333332", "34333332222122122", "333124433332444"],
  [6, 3, "2222121111", "11111111123221111", "211222111233211"],
  [34, 9, "2523233322", "11111111111111111", "221113433233344"],
  [13, 11, "2423233322", "11111111111111111", "221113433233344"],
  [20, 10, "1212214312", "12112131245532123", "243252342122211"],
  [22, 3, "2323224343", "22232222222322233", "331333332223444"],
  [27, 25, "2322233322", "22332232222322232", "323223333223323"],
  [20, 7, "3422223232", "22222222222222222", "222222222222311"],
  [5, 2, "2323213112", "11111121222212122", "211212222223211"],
  [21, 6, "2523245233", "11111111132314234", "421321224124312"],
  [19, 1, "2221222222", "11111111112222222", "111112222221322"],
  [35, 18, "2332233222", "22232222222122112", "334223322113322"],
  [5, 5, "2332233222", "22232222222122112", "334223322113322"],
  [20, 20, "2222222211", "22212112111112122", "222221222112222"],
  [35, 3, "2242223222", "11122222223322221", "222222222112332"],
  [7, 4, "2153111113", "11131111111111111", "111111113513241"],
  [12, 4, "2433224423", "32223232223323233", "232224434334333"],
  [38, 11, "2321211321", "11122111111111111", "123123411211344"],
  [27, 10, "2432243322", "24231111132332233", "433224411322344"],
  [17, 12, "3423244343", "43443334443424332", "441344333234444"],
  [28, 15, "3423233322", "11111111122212111", "221113433233344"],
  [23, 8, "2211213332", "44543544322333233", "344334433232333"],
  [30, 12, "3434234432", "22332232222222232", "423244534454343"],
  [20, 12, "2222213222", "11211211222112222", "222222212222221"],
  [11, 1, "4453425525", "44452423312122134", "155515543215353"],
  [17, 10, "5553444443", "22222222211111223", "144224433443455"]
];
const columns = Object.keys(widths);
const strong = new Set(["D", "AP", "AQ", "AR", "AS"]);
const clipped = new Set(["B", "C", "AL"]);

document.querySelector(".cells colgroup").innerHTML =
  '<col style="width:33px">' + columns.map(c => `<col style="width:${widths[c]}px">`).join("");
document.querySelector(".cells thead").innerHTML =
  "<tr><th></th>" + columns.map(c => `<th${c === "H" ? ' class="picked"' : ""}>${c}</th>`).join("") + "</tr>";

let html = "";
for (let r = 1; r <= 39; r++) {
  const a = answers[r - 2];
  const values = r === 1 ? headings : a ? [99 + r, a[0], a[1], ...(a[2] + a[3] + a[4])] : [];
  html += `<tr><th${r === 18 ? ' class="picked"' : ""}>${r}</th>`;
  columns.forEach((c, i) => {
    const v = values[i] ?? "";
    const cls = [];
    if (r === 1 && c !== "A" && c !== "AT") cls.push("green");
    if (a && c === "A") cls.push("yellow");
    if (strong.has(c)) cls.push("strong");
    if (r === 1 && typeof v === "string") cls.push("text");
    if (r === 1 && clipped.has(c)) cls.push("clip");
    if (r === 18 && c === "H") cls.push("active");
    html += `<td${cls.length ? ` class="${cls.join(" ")}"` : ""}>${v}</td>`;
  });
  html += "</tr>";
}
document.querySelector(".cells tbody").innerHTML = html;

document.querySelector(".tabs").innerHTML = ["List1", "List5", "List6", "List4", "List2", "List3"].map((n, i) =>
  `<button class="tab${n === "List5" ? " current" : ""}" style="z-index:${n === "List5" ? 9 : 8 - i}">` +
  `<svg viewBox="0 0 42 17"><path d="M.5.5l6 13q1 2 3 2h23q2 0 3-2l6-13"/></svg><span>${n}</span></button>`).join("");
```
